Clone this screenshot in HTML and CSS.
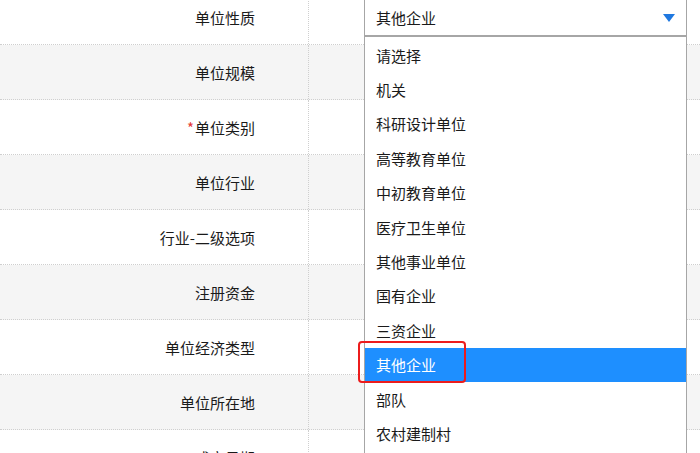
FILE: index.html
```html
<!DOCTYPE html>
<html lang="zh-CN">
<head>
<meta charset="utf-8">
<title>单位信息</title>
<link rel="stylesheet" href="styles.css">
</head>
<body>
<div class="form">
  <div class="row">
    <div class="label">单位性质</div>
    <div class="value">
      <div class="select">
        <span class="select-text">其他企业</span>
        <svg class="arrow" width="12" height="8" viewBox="0 0 12 8"><path d="M0 0 H12 L6 8 Z" fill="#1f78e0"/></svg>
        <ul class="dropdown">
          <li>请选择</li>
          <li>机关</li>
          <li>科研设计单位</li>
          <li>高等教育单位</li>
          <li>中初教育单位</li>
          <li>医疗卫生单位</li>
          <li>其他事业单位</li>
          <li>国有企业</li>
          <li>三资企业</li>
          <li class="active">其他企业<span class="mark"></span></li>
          <li>部队</li>
          <li>农村建制村</li>
        </ul>
      </div>
    </div>
  </div>
  <div class="row alt"><div class="label">单位规模</div><div class="value"></div></div>
  <div class="row"><div class="label"><span class="req">*</span>单位类别</div><div class="value"></div></div>
  <div class="row alt"><div class="label">单位行业</div><div class="value"></div></div>
  <div class="row"><div class="label">行业-二级选项</div><div class="value"></div></div>
  <div class="row alt"><div class="label">注册资金</div><div class="value"></div></div>
  <div class="row"><div class="label">单位经济类型</div><div class="value"></div></div>
  <div class="row alt"><div class="label">单位所在地</div><div class="value"></div></div>
  <div class="row"><div class="label">成立日期</div><div class="value"></div></div>
</div>
</body>
</html>
```
FILE: styles.css
```css
html, body {
  margin: 0;
  padding: 0;
  width: 700px;
  height: 453px;
  overflow: hidden;
  background: #fff;
  font-family: "Noto Sans CJK SC", "Noto Sans", sans-serif;
  font-size: 15px;
  color: #1a1a1a;
}
.form {
  margin-top: -10px;
  display: flex;
  flex-direction: column;
}
.row {
  display: flex;
  height: 55px;
  border-bottom: 1px dotted #cfcfcf;
  box-sizing: border-box;
  background: #fff;
}
.row.alt {
  background: #f5f5f5;
}
.label {
  width: 309px;
  flex: none;
  box-sizing: border-box;
  border-right: 1px dotted #cfcfcf;
  padding-right: 53px;
  display: flex;
  align-items: center;
  justify-content: flex-end;
}
.req {
  color: #e53935;
  margin-right: 1px;
}
.value {
  flex: 1;
  padding-left: 55px;
  display: flex;
  align-items: center;
}
.select {
  position: relative;
  width: 323px;
  height: 37px;
  margin-top: 1px;
  box-sizing: border-box;
  border: 1px solid #a6a6a6;
  background: #fff;
  display: flex;
  align-items: center;
  justify-content: space-between;
  padding: 0 11px 0 11px;
}
.select-text {
  line-height: 1;
}
.arrow {
  display: block;
}
.dropdown {
  position: absolute;
  left: -1px;
  top: 36px;
  width: 323px;
  margin: 0;
  padding: 1px 0 0 0;
  list-style: none;
  background: #fff;
  border: 1px solid #a6a6a6;
  box-sizing: border-box;
  height: 460px;
  z-index: 5;
}
.dropdown li {
  position: relative;
  height: 34.4px;
  display: flex;
  align-items: center;
  padding-left: 11px;
}
.dropdown li.active {
  background: #1e8fff;
  color: #fff;
}
.mark {
  position: absolute;
  left: -7px;
  top: -7px;
  width: 108px;
  height: 42px;
  box-sizing: border-box;
  border: 2.5px solid #ec1c1c;
  border-radius: 4px;
}
```
